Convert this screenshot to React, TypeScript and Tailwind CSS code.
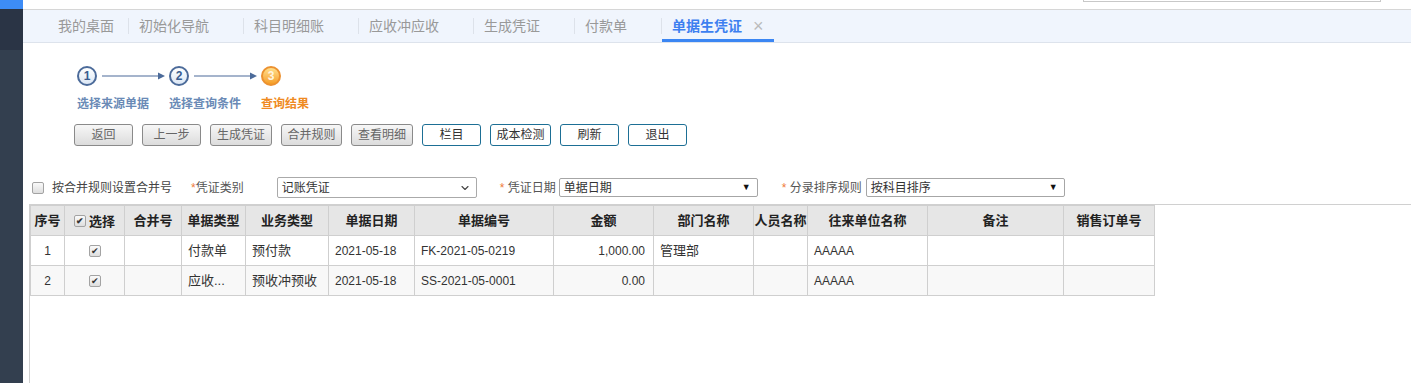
import React from 'react';
import { ChevronDown } from 'lucide-react';

const FONT = '"Liberation Sans", "Noto Sans CJK SC", sans-serif';

const tabs = ['我的桌面', '初始化导航', '科目明细账', '应收冲应收', '生成凭证', '付款单'];

const cols = [
    { title: '序号', w: 34 },
    { title: '选择', w: 60 },
    { title: '合并号', w: 57 },
    { title: '单据类型', w: 64 },
    { title: '业务类型', w: 83 },
    { title: '单据日期', w: 86 },
    { title: '单据编号', w: 139 },
    { title: '金额', w: 100 },
    { title: '部门名称', w: 100 },
    { title: '人员名称', w: 54 },
    { title: '往来单位名称', w: 120 },
    { title: '备注', w: 136 },
    { title: '销售订单号', w: 91 },
];

const rows = [
    { no: 1, type: '付款单', biz: '预付款', date: '2021-05-18', code: 'FK-2021-05-0219', amount: '1,000.00', dept: '管理部', unit: 'AAAAA' },
    { no: 2, type: '应收...', biz: '预收冲预收', date: '2021-05-18', code: 'SS-2021-05-0001', amount: '0.00', dept: '', unit: 'AAAAA' },
];

const Check = ({ checked }: { checked?: boolean }) => (
    <span className="inline-flex w-[12px] h-[12px] items-center justify-center rounded-[2px] border border-[#a3a3a3] bg-gradient-to-b from-[#fafafa] to-[#dedede] text-[9px] leading-none text-[#333] align-middle">
        {checked ? '✔' : ''}
    </span>
);

const Step = ({ n, active }: { n: number; active?: boolean }) => (
    <div
        className={
            active
                ? 'w-[20px] h-[20px] rounded-full border-2 border-[#ec9130] bg-gradient-to-b from-[#ffe08a] to-[#f59d1f] flex items-center justify-center text-[12px] font-bold text-[#fff5e0] leading-none'
                : 'w-[20px] h-[20px] rounded-full border-2 border-[#4c6b9a] bg-gradient-to-b from-white to-[#dce7f5] flex items-center justify-center text-[12px] font-bold text-[#3b5d8f] leading-none'
        }
    >
        {n}
    </div>
);

const Arrow = () => (
    <svg width="63" height="8" viewBox="0 0 63 8" className="mx-[4px] ml-[5px]">
        <line x1="0" y1="4" x2="57" y2="4" stroke="#4c6b9a" strokeWidth="1.2" />
        <polygon points="56,0.5 63,4 56,7.5" fill="#4c6b9a" />
    </svg>
);

const GrayBtn = ({ label, w }: { label: string; w: number }) => (
    <button
        style={{ width: w }}
        className="h-[22px] rounded-[3px] border border-[#8a8a8a] bg-gradient-to-b from-[#f7f7f7] to-[#dcdcdc] text-[12px] text-[#666] leading-none"
    >
        {label}
    </button>
);

const BlueBtn = ({ label, w }: { label: string; w: number }) => (
    <button
        style={{ width: w }}
        className="h-[22px] rounded-[3px] border border-[#1d6f95] bg-white text-[12px] text-[#333] leading-none"
    >
        {label}
    </button>
);

export default function App() {
    return (
        <div className="flex w-[1411px] h-[383px] overflow-hidden bg-white" style={{ fontFamily: FONT }}>
            {/* sidebar */}
            <div className="w-[23px] flex flex-col shrink-0">
                <div className="h-[9px] bg-[#3d8cf6]" />
                <div className="h-[41px] bg-[#2a3445]" />
                <div className="flex-1 bg-[#333f4f]" />
            </div>

            <div className="flex-1 flex flex-col min-w-0">
                {/* top strip */}
                <div className="h-[10px] border-b border-[#d6d6d6] flex justify-end">
                    <div className="w-[298px] h-[2px] border-x border-b border-[#c8c8c8] mr-[30px]" />
                </div>

                {/* tab bar */}
                <div className="h-[33px] bg-[#f0f5fd] border-b border-[#dde3ec] flex items-stretch pl-[24px] text-[14px] text-[#999]">
                    {tabs.map((t, i) => (
                        <div key={t} className="flex items-center">
                            {i > 0 && <span className="w-px h-[16px] bg-[#dde2ea]" />}
                            <span className={i === 0 ? 'pl-[11px] pr-[14px]' : 'pl-[10px] pr-[34px]'}>{t}</span>
                        </div>
                    ))}
                    <div className="flex items-center">
                        <span className="w-px h-[16px] bg-[#dde2ea]" />
                        <div className="relative h-full flex items-center pl-[10px] pr-[10px]">
                            <span className="font-bold text-[#3d7ff0]">单据生凭证</span>
                            <span className="ml-[11px] text-[18px] leading-none text-[#bbb]">×</span>
                            <span className="absolute left-0 right-0 bottom-[0px] h-[3px] bg-[#3b86f3]" />
                        </div>
                    </div>
                </div>

                {/* steps */}
                <div className="pl-[54px] mt-[23px] flex items-center">
                    <Step n={1} />
                    <Arrow />
                    <Step n={2} />
                    <Arrow />
                    <Step n={3} active />
                </div>
                <div className="pl-[54px] mt-[10px] flex text-[12px] font-bold leading-[16px]">
                    <span className="w-[92px] text-[#6a8ab6]">选择来源单据</span>
                    <span className="w-[92px] text-[#6a8ab6]">选择查询条件</span>
                    <span className="text-[#ef8a22]">查询结果</span>
                </div>

                {/* buttons */}
                <div className="pl-[51px] mt-[12px] flex gap-[9px]">
                    <GrayBtn label="返回" w={59} />
                    <GrayBtn label="上一步" w={59} />
                    <GrayBtn label="生成凭证" w={62} />
                    <GrayBtn label="合并规则" w={61} />
                    <GrayBtn label="查看明细" w={62} />
                    <BlueBtn label="栏目" w={59} />
                    <BlueBtn label="成本检测" w={61} />
                    <BlueBtn label="刷新" w={59} />
                    <BlueBtn label="退出" w={59} />
                </div>

                {/* filter row */}
                <div className="mt-[31px] h-[21px] flex items-center text-[12px] text-[#555]">
                    <span className="ml-[9px]"><Check /></span>
                    <span className="ml-[8px] text-[#444]">按合并规则设置合并号</span>
                    <span className="ml-[19px]"><span className="text-[#f07c3c]">*</span>凭证类别</span>
                    <div className="ml-[33px] w-[200px] h-[21px] border border-[#aaa] rounded-[2px] flex items-center justify-between pl-[4px] pr-[5px] text-[#333]">
                        <span>记账凭证</span>
                        <ChevronDown size={12} strokeWidth={2.2} className="text-[#444]" />
                    </div>
                    <span className="ml-[23px]"><span className="text-[#f07c3c]">*</span> 凭证日期</span>
                    <div className="ml-[3px] w-[199px] h-[19px] border border-[#a6a6a6] rounded-[2px] flex items-center justify-between pl-[4px] pr-[6px] text-[#333]">
                        <span>单据日期</span>
                        <span className="text-[9px] text-[#111]">▼</span>
                    </div>
                    <span className="ml-[24px]"><span className="text-[#f07c3c]">*</span> 分录排序规则</span>
                    <div className="ml-[4px] w-[199px] h-[19px] border border-[#a6a6a6] rounded-[2px] flex items-center justify-between pl-[4px] pr-[6px] text-[#333]">
                        <span>按科目排序</span>
                        <span className="text-[9px] text-[#111]">▼</span>
                    </div>
                </div>

                {/* grid */}
                <div className="mt-[6px] ml-[6px] flex-1 border-t border-l border-[#d0d0d0]">
                    <table className="table-fixed border-collapse text-[12px] text-[#333]" style={{ width: 1124 }}>
                        <colgroup>
                            {cols.map((c) => (
                                <col key={c.title} style={{ width: c.w }} />
                            ))}
                        </colgroup>
                        <thead>
                            <tr className="h-[30px] bg-[#e6e6e6]">
                                {cols.map((c) => (
                                    <th key={c.title} className="border border-[#cfcfcf] font-bold text-[13px] text-[#222] text-center px-0 whitespace-nowrap overflow-hidden">
                                        {c.title === '选择' ? (
                                            <span className="inline-flex items-center gap-[3px]">
                                                <Check checked />
                                                {c.title}
                                            </span>
                                        ) : (
                                            c.title
                                        )}
                                    </th>
                                ))}
                            </tr>
                        </thead>
                        <tbody>
                            {rows.map((r, i) => (
                                <tr key={r.no} className={i % 2 === 1 ? 'h-[30px] bg-[#f8f8f8]' : 'h-[30px] bg-white'}>
                                    <td className="border border-[#cfcfcf] text-center">{r.no}</td>
                                    <td className="border border-[#cfcfcf] text-center"><Check checked /></td>
                                    <td className="border border-[#cfcfcf]" />
                                    <td className="border border-[#cfcfcf] pl-[6px] text-[13px] whitespace-nowrap overflow-hidden">{r.type}</td>
                                    <td className="border border-[#cfcfcf] pl-[6px] text-[13px] whitespace-nowrap">{r.biz}</td>
                                    <td className="border border-[#cfcfcf] pl-[6px]">{r.date}</td>
                                    <td className="border border-[#cfcfcf] pl-[6px]">{r.code}</td>
                                    <td className="border border-[#cfcfcf] pr-[8px] text-right">{r.amount}</td>
                                    <td className="border border-[#cfcfcf] pl-[6px] text-[13px]">{r.dept}</td>
                                    <td className="border border-[#cfcfcf]" />
                                    <td className="border border-[#cfcfcf] pl-[6px]">{r.unit}</td>
                                    <td className="border border-[#cfcfcf]" />
                                    <td className="border border-[#cfcfcf]" />
                                </tr>
                            ))}
                        </tbody>
                    </table>
                </div>
            </div>
        </div>
    );
}
